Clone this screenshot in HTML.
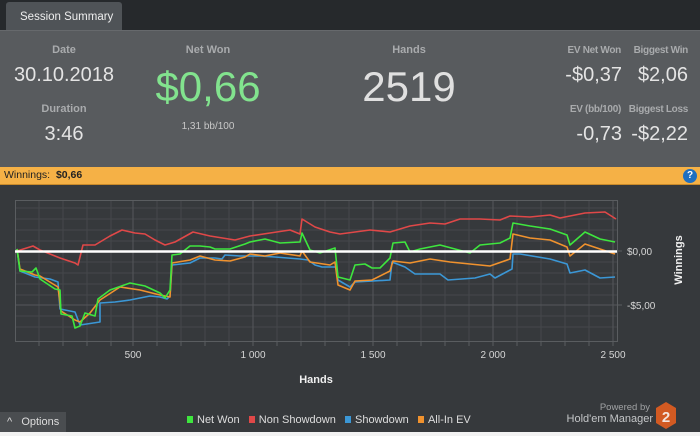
<!DOCTYPE html>
<html><head><meta charset="utf-8"><style>
*{margin:0;padding:0;box-sizing:border-box}
body{width:700px;height:436px;overflow:hidden;background:#36393c;font-family:"Liberation Sans",sans-serif;position:relative}
.a{position:absolute;white-space:nowrap}
.c{transform:translateX(-50%)}
.lbl{color:#a9abad;font-size:11px;font-weight:bold}
.rl{color:#a9abad;font-size:10px;font-weight:bold;letter-spacing:-0.3px}
.val{color:#e4e4e4;font-size:20px}
</style></head><body>
<div class="a" style="left:0;top:0;width:700px;height:30px;background:#26292c"></div>
<div class="a" style="left:6px;top:2px;width:116px;height:29px;background:#4f5357;border-radius:3px 3px 0 0;color:#eee;font-size:11.5px;padding:9px 0 0 14px">Session Summary</div>
<div class="a" style="left:0;top:30px;width:700px;height:137px;background:#585b5e;border-top:1px solid #66696c"></div>

<div class="a c lbl" style="left:64px;top:44px">Date</div>
<div class="a c val" style="left:64px;top:64px">30.10.2018</div>
<div class="a c lbl" style="left:64px;top:103px">Duration</div>
<div class="a c val" style="left:64px;top:123px">3:46</div>

<div class="a c lbl" style="left:208px;top:44px">Net Won</div>
<div class="a c" style="left:208px;top:63px;font-size:42px;color:#82e38e">$0,66</div>
<div class="a c" style="left:208px;top:121px;font-size:10px;color:#c8c8c8">1,31 bb/100</div>

<div class="a c lbl" style="left:409px;top:44px">Hands</div>
<div class="a c" style="left:409px;top:63px;font-size:42px;color:#e0e0e0">2519</div>

<div class="a rl" style="right:79px;top:45px">EV Net Won</div>
<div class="a rl" style="right:12px;top:45px">Biggest Win</div>
<div class="a val" style="right:78px;top:64px">-$0,37</div>
<div class="a val" style="right:12px;top:64px">$2,06</div>
<div class="a rl" style="right:79px;top:104px">EV (bb/100)</div>
<div class="a rl" style="right:12px;top:104px">Biggest Loss</div>
<div class="a val" style="right:78px;top:123px">-0,73</div>
<div class="a val" style="right:12px;top:123px">-$2,22</div>

<div class="a" style="left:0;top:167px;width:700px;height:18px;background:#f5b146;border-bottom:1px solid #c98a2a;font-size:10.5px;color:#222;padding:2px 0 0 4px">Winnings:&nbsp; <b>$0,66</b></div>
<div class="a" style="left:683px;top:169px;width:14px;height:14px;border-radius:50%;background:#1f6fc0;color:#fff;font-size:10px;font-weight:bold;text-align:center;line-height:14px">?</div>

<svg class="a" style="left:0;top:0" width="700" height="436" viewBox="0 0 700 436">
<g stroke="#45484b" stroke-width="1">
<path d="M39 201V341M63 201V341M87 201V341M111 201V341M157 201V341M181 201V341M205 201V341M229 201V341M277 201V341M301 201V341M325 201V341M349 201V341M397 201V341M421 201V341M445 201V341M469 201V341M517 201V341M541 201V341M565 201V341M589 201V341"/>
<path d="M15 208H617M15 219H617M15 230H617M15 241H617M15 262H617M15 273H617M15 284H617M15 295H617M15 316H617M15 327H617"/>
</g>
<g stroke="#55585b" stroke-width="1">
<path d="M133 201V341M253 201V341M373 201V341M493 201V341M613 201V341M15 305H617"/>
</g>
<rect x="15.5" y="200.5" width="602" height="141" fill="none" stroke="#5a5d60"/>
<g stroke="#5a5d60"><path d="M617 305H622M617 251H622M39 341v5M63 341v5M87 341v5M111 341v5M133 341v5M157 341v5M181 341v5M205 341v5M229 341v5M253 341v5M277 341v5M301 341v5M325 341v5M349 341v5M373 341v5M397 341v5M421 341v5M445 341v5M469 341v5M493 341v5M517 341v5M541 341v5M565 341v5M589 341v5M613 341v5"/></g>
<g fill="none" stroke-width="1.6" stroke-linejoin="round">
<polyline stroke="#e04848" points="17,251 33,246 40,250 60,258 75,263 78,265 83,245 95,245 110,236 122,230 135,233 145,234 155,240 165,245 175,242 193,232 210,236 235,240 250,236 270,233 290,230 300,234 302,219 315,227 330,232 340,234 355,232 370,230 390,232 410,226 430,223 445,224 460,219 480,219 500,220 510,216 530,217 550,215 560,218 585,213 605,212 616,219"/>
<polyline stroke="#3b97d6" points="17,249 20,271 35,277 50,279 58,282 60,309 75,312 80,325 100,322 100,303 115,302 130,300 150,296 160,297 167,299 170,296 172,265 190,263 200,258 215,258 222,259 225,255 240,256 260,256 275,257 300,259 308,260 315,265 322,267 336,267 338,280 350,287 355,282 390,280 392,262 405,267 415,274 440,274 448,280 475,278 490,274 495,278 512,269 513,254 520,254 550,259 567,264 570,273 585,270 600,278 615,277"/>
<polyline stroke="#f0922e" points="17,249 20,269 35,275 40,276 58,287 61,311 75,320 80,322 90,313 100,300 120,287 140,290 160,295 170,297 172,263 190,260 200,256 215,260 230,261 245,257 250,254 265,256 280,253 300,256 302,251 310,262 330,265 335,262 338,285 350,290 355,281 372,280 390,271 393,261 410,263 430,259 450,262 470,264 490,266 510,259 513,234 530,238 550,240 567,247 570,256 585,244 600,249 615,254"/>
<polyline stroke="#3ee63e" points="17,249 20,271 32,272 36,268 40,279 55,289 60,290 61,314 72,316 75,328 80,326 85,313 95,316 98,299 110,290 130,283 145,286 160,293 165,298 170,290 172,255 180,254 190,246 200,246 210,247 215,249 230,249 245,244 250,242 265,239 280,243 300,242 302,233 310,250 320,253 335,248 338,277 350,280 355,265 365,264 372,268 380,268 390,258 393,243 405,242 410,252 420,249 440,245 455,249 470,253 480,245 500,243 510,238 513,223 530,226 550,229 567,235 570,245 585,232 600,239 615,242"/>
</g>
<path d="M15 251.5H617" stroke="#fff" stroke-width="2.5"/>
<g fill="#d6d6d6" font-family="Liberation Sans,sans-serif" font-size="10">
<text x="627" y="255">$0,00</text><text x="627" y="309">-$5,00</text>
<text x="133" y="358" text-anchor="middle">500</text><text x="253" y="358" text-anchor="middle">1 000</text><text x="373" y="358" text-anchor="middle">1 500</text><text x="493" y="358" text-anchor="middle">2 000</text><text x="613" y="358" text-anchor="middle">2 500</text>
<text x="316" y="383" text-anchor="middle" font-weight="bold" fill="#f0f0f0" font-size="11">Hands</text>
<text transform="translate(682,260) rotate(-90)" text-anchor="middle" font-weight="bold" fill="#f0f0f0" font-size="11">Winnings</text>
</g>
<polygon points="666,402 676,408 676,423 666,429 656,423 656,408" fill="#d25a22"/>
<text x="666" y="422" text-anchor="middle" font-family="Liberation Sans,sans-serif" font-weight="bold" font-size="15" fill="#f4e4dc">2</text>
</svg>

<div class="a" style="right:50px;top:402px;font-size:9.5px;color:#a0a2a4">Powered by</div>
<div class="a" style="right:47px;top:413px;font-size:11px;color:#c4c6c8">Hold'em Manager</div>

<div class="a" style="left:0;top:412px;width:66px;height:20px;background:#4a4d50;color:#ddd;font-size:11px;padding:4px 0 0 7px">^&nbsp;&nbsp; Options</div>

<div class="a" style="left:187px;top:414px;font-size:11px;color:#ddd">
<span style="display:inline-block;width:6px;height:7px;background:#3ee63e;margin-right:4px"></span>Net Won&nbsp;&nbsp;
<span style="display:inline-block;width:6px;height:7px;background:#e04848;margin-right:4px"></span>Non Showdown&nbsp;&nbsp;
<span style="display:inline-block;width:6px;height:7px;background:#3b97d6;margin-right:4px"></span>Showdown&nbsp;&nbsp;
<span style="display:inline-block;width:6px;height:7px;background:#f0922e;margin-right:4px"></span>All-In EV</div>
<div class="a" style="left:0;top:432px;width:700px;height:4px;background:#f2f2f2"></div>
</body></html>
